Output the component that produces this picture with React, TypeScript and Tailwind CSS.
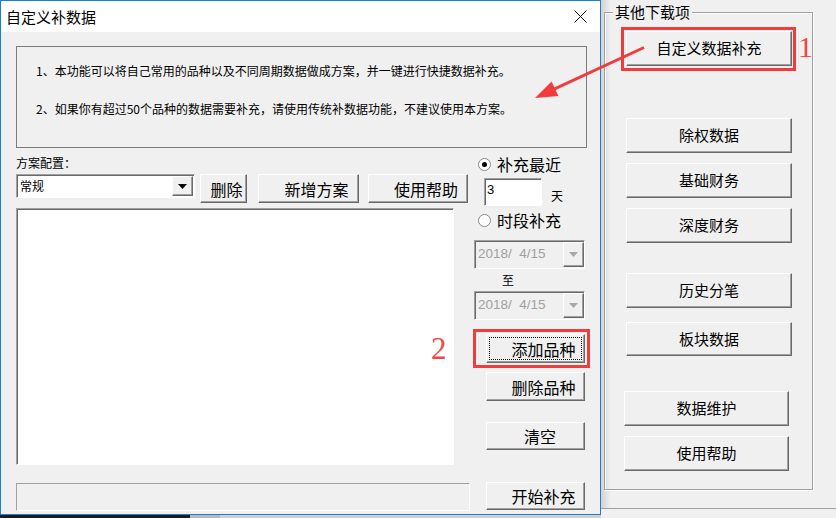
import React from "react";

const raised =
  "bg-[#f0f0f0] border border-t-white border-l-white border-r-[#696969] border-b-[#696969] shadow-[inset_-1px_-1px_0_#a0a0a0]";
const sunken =
  "border border-t-[#a0a0a0] border-l-[#a0a0a0] border-r-white border-b-white shadow-[inset_1px_1px_0_#696969]";

function WinButton({
  children,
  className = "",
}: {
  children: React.ReactNode;
  className?: string;
}) {
  return (
    <div className={`flex items-center justify-center text-black ${raised} ${className}`}>
      <span>{children}</span>
    </div>
  );
}

function Radio({ checked, label }: { checked?: boolean; label: string }) {
  return (
    <div className="flex items-center h-[16px] ml-[4px]">
      <div className="w-[13px] h-[13px] rounded-full border border-[#8a8a8a] bg-white flex items-center justify-center">
        {checked && <div className="w-[5px] h-[5px] rounded-full bg-black" />}
      </div>
      <span className="ml-[6px] text-[16px] leading-[16px]">{label}</span>
    </div>
  );
}

function Triangle({ color }: { color: string }) {
  return (
    <svg width="9" height="5" viewBox="0 0 9 5">
      <polygon points="0,0 9,0 4.5,5" fill={color} />
    </svg>
  );
}

function DateBox({ className = "" }: { className?: string }) {
  return (
    <div className={`w-[111px] h-[29px] bg-[#f0f0f0] flex items-stretch ${sunken} ${className}`}>
      <span className="flex-1 pl-[3px] flex items-center text-[13.5px] text-[#a0a0a0] font-['Liberation_Sans',sans-serif]">
        2018/&nbsp;&nbsp;4/15
      </span>
      <div className={`w-[21px] my-[1px] mr-0 flex items-center justify-center ${raised}`}>
        <Triangle color="#a8a8a8" />
      </div>
    </div>
  );
}

function Dialog() {
  return (
    <div className="w-[601px] h-[515px] border border-[#1a7fd4] bg-[#f0f0f0] flex flex-col">
      <div className="h-[31px] bg-white flex items-center justify-between pl-[5px] pr-[13px]">
        <span className="text-[15px] leading-[15px]">自定义补数据</span>
        <svg width="13" height="13" viewBox="0 0 13 13">
          <path d="M0.5 0.5 L12.5 12.5 M12.5 0.5 L0.5 12.5" stroke="#111" strokeWidth="1" />
        </svg>
      </div>

      <div className="pl-[15px] flex flex-col">
        <div className="mt-[14px] w-[571px] h-[102px] border border-[#7c7c7c] pl-[19px] pt-[18px] text-[12px] leading-[12px] flex flex-col">
          <span>1、本功能可以将自己常用的品种以及不同周期数据做成方案，并一键进行快捷数据补充。</span>
          <span className="mt-[26px]">2、如果你有超过50个品种的数据需要补充，请使用传统补数据功能，不建议使用本方案。</span>
        </div>

        <div className="flex">
          {/* left column */}
          <div className="w-[454px] flex flex-col">
            <span className="mt-[9px] text-[12px] leading-[12px] h-[12px]">方案配置：</span>
            <div className="mt-[5px] flex items-start h-[28px]">
              <div className={`w-[179px] h-[24px] bg-white flex items-stretch ${sunken}`}>
                <span className="flex-1 pl-[3px] flex items-center text-[12px]">常规</span>
                <div className={`w-[21px] my-[1px] mr-[1px] flex items-center justify-center ${raised}`}>
                  <Triangle color="#000" />
                </div>
              </div>
              <WinButton className="ml-[5px] w-[47px] h-[29px] text-[16px] pl-[6px]">删除</WinButton>
              <WinButton className="ml-[11px] w-[101px] h-[29px] text-[16px] pl-[16px]">新增方案</WinButton>
              <WinButton className="ml-[9px] w-[100px] h-[29px] text-[16px] pl-[16px]">使用帮助</WinButton>
            </div>
            <div className={`mt-[6px] w-[438px] h-[257px] bg-white ${sunken}`} />
            <div className="mt-[18px] w-[454px] h-[28px] border border-t-[#a0a0a0] border-l-[#a0a0a0] border-r-white border-b-white" />
          </div>

          {/* right column */}
          <div className="ml-[4px] w-[116px] flex flex-col">
            <div className="mt-[8px]">
              <Radio checked label="补充最近" />
            </div>
            <div className="mt-[6px] flex items-end h-[28px]">
              <div className={`ml-[10px] w-[58px] h-[28px] bg-white pl-[2px] pt-[4px] text-[13px] leading-[13px] font-['Liberation_Sans',sans-serif] ${sunken}`}>
                3
              </div>
              <span className="ml-[9px] mb-[4px] text-[12px] leading-[12px]">天</span>
            </div>
            <div className="mt-[6px]">
              <Radio label="时段补充" />
            </div>
            <DateBox className="mt-[12px]" />
            <span className="mt-[5px] ml-[28px] text-[12px] leading-[12px] h-[12px]">至</span>
            <DateBox className="mt-[5px]" />

            <div className="relative mt-[14px] ml-[12px] w-[99px] h-[29px]">
              <WinButton className="w-[99px] h-[29px] text-[16px] pl-[16px]">
                添加品种
              </WinButton>
              <div className="absolute left-[3px] top-[3px] right-[3px] bottom-[3px] border border-dotted border-black pointer-events-none" />
              <div className="absolute -left-[13px] -top-[5px] -right-[5px] -bottom-[5px] border-[3px] border-[#f03c3c] pointer-events-none" />
              <span className="absolute -left-[55px] top-[-1px] text-[31px] leading-[31px] text-[#f04646] font-['Liberation_Serif',serif]">
                2
              </span>
            </div>
            <WinButton className="mt-[9px] ml-[12px] w-[99px] h-[29px] text-[16px] pl-[16px]">删除品种</WinButton>
            <WinButton className="mt-[21px] ml-[12px] w-[99px] h-[28px] text-[16px] pl-[9px]">清空</WinButton>
            <WinButton className="mt-[32px] ml-[12px] w-[99px] h-[28px] text-[16px] pl-[16px]">开始补充</WinButton>
          </div>
        </div>
      </div>
    </div>
  );
}

function SidePanel() {
  const btn = "h-[35px] text-[15px]";
  return (
    <div className="flex-1 h-[518px] flex flex-col bg-[linear-gradient(to_right,#d2d2d2,#f0f0f0_10px)]">
      <div className="relative ml-[3px] mt-[12px] w-[209px] h-[478px] border border-[#a0a0a0] shadow-[inset_1px_1px_0_#fff,1px_1px_0_#fff] flex flex-col">
        <span className="absolute left-[8px] -top-[9px] px-[2px] bg-[#f0f0f0] text-[15px] leading-[15px]">其他下载项</span>

        <div className="relative mt-[18px] ml-[21px] w-[166px]">
          <WinButton className={`w-[166px] ${btn}`}>自定义数据补充</WinButton>
          <div className="absolute -left-[5px] -top-[4px] -right-[4px] -bottom-[5px] border-[3px] border-[#f03c3c] pointer-events-none" />
          <span className="absolute left-[172px] top-[1px] text-[30px] leading-[30px] text-[#f04646] font-['Liberation_Serif',serif]">
            1
          </span>
        </div>
        <WinButton className={`mt-[52px] ml-[21px] w-[166px] ${btn}`}>除权数据</WinButton>
        <WinButton className={`mt-[10px] ml-[21px] w-[166px] ${btn}`}>基础财务</WinButton>
        <WinButton className={`mt-[10px] ml-[21px] w-[166px] ${btn}`}>深度财务</WinButton>
        <WinButton className={`mt-[30px] ml-[21px] w-[166px] ${btn}`}>历史分笔</WinButton>
        <WinButton className={`mt-[14px] ml-[21px] w-[166px] h-[34px] text-[15px]`}>板块数据</WinButton>
        <WinButton className={`mt-[35px] ml-[19px] w-[165px] ${btn}`}>数据维护</WinButton>
        <WinButton className={`mt-[10px] ml-[19px] w-[165px] ${btn}`}>使用帮助</WinButton>
      </div>
      <div className="mt-[18px] flex-1 border-t border-[#a0a0a0] bg-[#f0f0f0]" />
    </div>
  );
}

export default function App() {
  return (
    <div className="relative w-[836px] h-[518px] overflow-hidden bg-[#f0f0f0] text-black font-['Noto_Sans_CJK_SC',sans-serif] flex">
      <div className="flex flex-col">
        <Dialog />
        <div className="flex h-[3px]">
          <div className="w-[190px] bg-[#1b1b1b]" />
          <div className="w-[30px] bg-[#b9b9b9]" />
          <div className="flex-1 bg-[#cfcfcf]" />
        </div>
      </div>
      <SidePanel />

      <svg
        className="absolute left-0 top-0 pointer-events-none"
        width="836"
        height="518"
        viewBox="0 0 836 518"
      >
        <line x1="644" y1="47.5" x2="553" y2="89.6" stroke="#f03c3c" strokeWidth="3" />
        <polygon points="535,98 551.6,81.5 558.4,96.1" fill="#f03c3c" />
      </svg>
    </div>
  );
}
